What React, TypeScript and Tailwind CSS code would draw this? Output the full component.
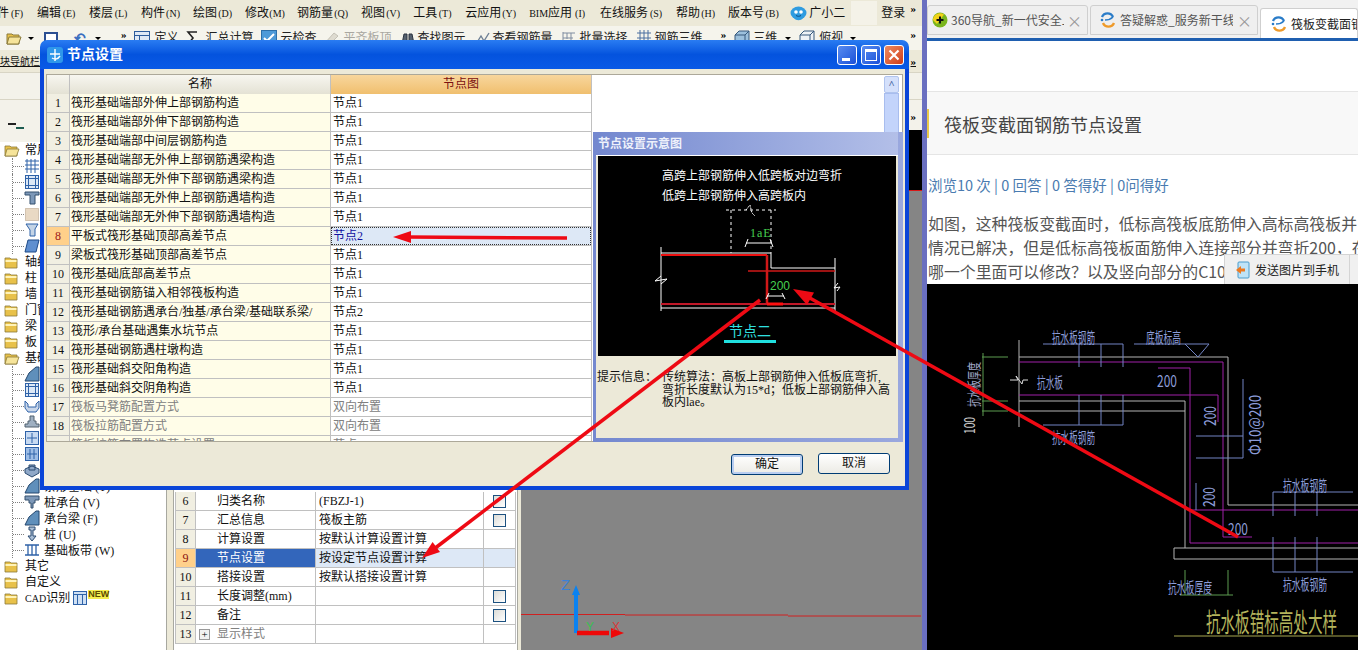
const menuItems = [
  ["文件", "(F)"],
  ["编辑", "(E)"],
  ["楼层", "(L)"],
  ["构件", "(N)"],
  ["绘图", "(D)"],
  ["修改", "(M)"],
  ["钢筋量", "(Q)"],
  ["视图", "(V)"],
  ["工具", "(T)"],
  ["云应用", "(Y)"],
  ["BIM应用", "(I)"],
  ["在线服务", "(S)"],
  ["帮助", "(H)"],
  ["版本号", "(B)"],
];

const nodeRows = [
  ["筏形基础端部外伸上部钢筋构造", "节点1"],
  ["筏形基础端部外伸下部钢筋构造", "节点1"],
  ["筏形基础端部中间层钢筋构造", "节点1"],
  ["筏形基础端部无外伸上部钢筋遇梁构造", "节点1"],
  ["筏形基础端部无外伸下部钢筋遇梁构造", "节点1"],
  ["筏形基础端部无外伸上部钢筋遇墙构造", "节点1"],
  ["筏形基础端部无外伸下部钢筋遇墙构造", "节点1"],
  ["平板式筏形基础顶部高差节点", "节点2"],
  ["梁板式筏形基础顶部高差节点", "节点1"],
  ["筏形基础底部高差节点", "节点1"],
  ["筏形基础钢筋锚入相邻筏板构造", "节点1"],
  ["筏形基础钢筋遇承台/独基/承台梁/基础联系梁/", "节点2"],
  ["筏形/承台基础遇集水坑节点", "节点1"],
  ["筏形基础钢筋遇柱墩构造", "节点1"],
  ["筏形基础斜交阳角构造", "节点1"],
  ["筏形基础斜交阴角构造", "节点1"],
  ["筏板马凳筋配置方式", "双向布置"],
  ["筏板拉筋配置方式", "双向布置"],
  ["筏板拉筋布置构造节点设置", "节点1"],
];

const propRows = [
  { n: 6, name: "归类名称", value: "(FBZJ-1)", check: true },
  { n: 7, name: "汇总信息", value: "筏板主筋", check: true },
  { n: 8, name: "计算设置", value: "按默认计算设置计算" },
  { n: 9, name: "节点设置", value: "按设定节点设置计算", selected: true },
  { n: 10, name: "搭接设置", value: "按默认搭接设置计算" },
  { n: 11, name: "长度调整(mm)", value: "", check: true },
  { n: 12, name: "备注", value: "", check: true },
  { n: 13, name: "显示样式", value: "", plus: true },
];

// labels of the child rows above 条形基础 sit behind the dialog, so they are left out
const treeRows: { label: string; icon?: string; open?: boolean }[] = [
  { label: "常用", open: true },
  { label: "", icon: "grid" },
  { label: "", icon: "frame" },
  { label: "", icon: "column" },
  { label: "", icon: "speck" },
  { label: "", icon: "beam" },
  { label: "", icon: "slab" },
  { label: "轴线" },
  { label: "柱" },
  { label: "墙" },
  { label: "门窗洞" },
  { label: "梁" },
  { label: "板" },
  { label: "基础", open: true },
  { label: "", icon: "beam2" },
  { label: "", icon: "frame" },
  { label: "", icon: "cup" },
  { label: "", icon: "pier" },
  { label: "", icon: "cross" },
  { label: "", icon: "cross2" },
  { label: "", icon: "block" },
  { label: "条形基础 (T)", icon: "beam2" },
  { label: "桩承台 (V)", icon: "pier2" },
  { label: "承台梁 (F)", icon: "beam2" },
  { label: "桩 (U)", icon: "pile" },
  { label: "基础板带 (W)", icon: "band" },
  { label: "其它" },
  { label: "自定义" },
];

function Folder({ open }: { open?: boolean }) {
  return (
    <svg width="16" height="14" viewBox="0 0 16 14" className="shrink-0">
      <path d="M1 3h5l1 1h6v9H1z" fill="#e8c14a" stroke="#8a7a3a" strokeWidth="0.8" />
      {open ? (
        <path d="M3 6h12l-2.5 7H1z" fill="#f6e49a" stroke="#8a7a3a" strokeWidth="0.8" />
      ) : (
        <path d="M1.5 5h11v2h-11z" fill="#fff3b8" />
      )}
    </svg>
  );
}

function TreeIcon({ kind }: { kind: string }) {
  const blue = "#2f62a8";
  return (
    <svg width="16" height="16" viewBox="0 0 16 16" className="shrink-0">
      {kind === "grid" && <path d="M1 3h14M1 7h14M1 11h14M3 1v14M7 1v14M11 1v14" stroke={blue} strokeWidth="1" fill="none" />}
      {kind === "frame" && (
        <g fill="#dce8f6" stroke={blue}>
          <rect x="1.5" y="1.5" width="13" height="13" />
          <rect x="4.5" y="4.5" width="7" height="7" />
          <path d="M1.5 4.5h13M1.5 11.5h13M4.5 1.5v13M11.5 1.5v13" fill="none" />
        </g>
      )}
      {kind === "bars" && (
        <g fill="#cfe0f4" stroke={blue}>
          <rect x="1.5" y="1.5" width="13" height="13" />
          <path d="M1.5 4.5h13M5.5 4.5v10M10.5 4.5v10" fill="none" />
        </g>
      )}
      {kind === "column" && <path d="M1 2h14v3h-4v9H6V5H1z" fill="#7d98b8" stroke="#34506e" />}
      {kind === "speck" && <rect x="1.5" y="2.5" width="13" height="12" fill="#e9d9c4" stroke="#b09a80" strokeDasharray="1 1" />}
      {kind === "beam" && <path d="M2 2h12l-3 5v7H6V8z" fill="#c4d4e6" stroke={blue} />}
      {kind === "slab" && <path d="M4 2h11l-3 12H1z" fill="#5f8fd0" stroke="#1e4a88" />}
      {kind === "beam2" && <path d="M1 15l4-8 7-6h3v14z" fill="#5f8fbb" stroke="#24476e" />}
      {kind === "cup" && <path d="M1 3l3 3v3h8V6l3-3v7l-3 4H4l-3-4z" fill="#c8d6ea" stroke={blue} />}
      {kind === "pier" && <path d="M6 2h4v5h2v3h3v3H1v-3h3V7h2z" fill="#9fb0c2" stroke="#51606e" />}
      {kind === "pier2" && <path d="M1 2h14v4h-4v3H9v5H7V9H5V6H1z" fill="#7d98b8" stroke="#34506e" />}
      {kind === "cross" && (
        <g fill="#c7daf2" stroke={blue}>
          <rect x="1.5" y="1.5" width="13" height="13" />
          <path d="M8 3v10M3 8h10" fill="none" />
        </g>
      )}
      {kind === "cross2" && (
        <g fill="#9dbde6" stroke={blue}>
          <rect x="1.5" y="1.5" width="13" height="13" />
          <path d="M6 3v10M10 3v10M3 8h10" fill="none" />
        </g>
      )}
      {kind === "block" && <path d="M1 7l7-3 7 3v4l-7 4-7-4zM5 3h6v5H5z" fill="#8fa8c8" stroke="#2b4a70" />}
      {kind === "pile" && <path d="M5 1h6v3H9v6h3l-4 5-4-5h3V4H5z" fill="#a9bed6" stroke="#2b4a70" />}
      {kind === "band" && <path d="M1 3h14M1 13h14M4 3v10M8 3v10M12 3v10" stroke={blue} strokeWidth="1.3" fill="none" />}
    </svg>
  );
}

function Chevrons() {
  return <span className="text-[11px] font-bold leading-none text-black">»</span>;
}

function ToolIcon({ kind, className }: { kind: string; className: string }) {
  return (
    <svg width="16" height="16" viewBox="0 0 16 16" className={className}>
      {kind === "table" && (
        <g fill="#dfe9f6" stroke="#2d5c9c">
          <rect x="0.5" y="1.5" width="15" height="13" />
          <path d="M0.5 5.5h15M5.5 5.5v9" fill="none" />
        </g>
      )}
      {kind === "sigma" && <path d="M12 2H3l5 6-5 6h9" fill="none" stroke="#222" strokeWidth="1.6" />}
      {kind === "check" && (
        <g>
          <rect x="0.5" y="0.5" width="15" height="15" fill="#4d9ad8" stroke="#2d6fa8" />
          <path d="M3 8l3 3 7-7" fill="none" stroke="#fff" strokeWidth="2" />
        </g>
      )}
      {kind === "flat" && <path d="M1 14L11 3l4 3-9 9z" fill="#dedbd0" stroke="#c4c1b6" />}
      {kind === "binoc" && <path d="M2 14l2-10h3v10zM9 14V4h3l2 10z" fill="#54606e" stroke="#2a3340" />}
      {kind === "bars" && <path d="M1 14L6 6l3 5 5-8" fill="none" stroke="#6d7f94" strokeWidth="1.4" />}
      {kind === "batch" && <path d="M2 2v12M2 3h12M6 3v6M10 3v9M2 8h10" fill="none" stroke="#7e8ca0" />}
      {kind === "rebar" && <path d="M1 3h14M1 8h14M4 0v16M8 0v16M12 0v16" fill="none" stroke="#4a6ea0" />}
      {kind === "cube" && <path d="M1 5l4-4h10v10l-4 4H1zM1 5h10v10M11 5l4-4" fill="#9cc0dc" stroke="#36597c" />}
      {kind === "cube2" && <path d="M1 5l4-4h10v10l-4 4H1zM1 5h10v10M11 5l4-4" fill="#eef2f6" stroke="#36597c" />}
    </svg>
  );
}

function Caret({ className }: { className: string }) {
  return <span className={`w-0 h-0 border-x-[3px] border-x-transparent border-t-[3px] border-t-black ${className}`} />;
}

function MenuBar() {
  return (
    <div className="h-[26px] flex items-center text-[12px] text-[#111] bg-[#ece9d8] whitespace-nowrap overflow-hidden">
      <div className="flex items-center gap-[12px] -ml-[15px]">
        {menuItems.map(([label, key]) => (
          <span key={label}>
            {label === "BIM应用" ? (
              <>
                <span className="text-[10px]">BIM</span>应用
              </>
            ) : (
              label
            )}
            <span className="inline-block w-[16px] text-center text-[10px] font-normal">{key}</span>
          </span>
        ))}
      </div>
      <svg width="17" height="16" viewBox="0 0 17 16" className="ml-[10px] shrink-0">
        <ellipse cx="8.5" cy="8" rx="8" ry="6.5" fill="#2f9ce0" />
        <path d="M4 13c2 3 7 3 9 0z" fill="#2f9ce0" />
        <circle cx="6" cy="7" r="1.8" fill="#fff" />
        <circle cx="11" cy="7" r="1.8" fill="#fff" />
        <path d="M6 10.5c1.5 1 3.5 1 5 0" stroke="#0b4a80" fill="none" />
      </svg>
      <span className="ml-[2px]">广小二</span>
      <span className="ml-[6px] w-[26px] h-[24px] bg-[#f4f2e8]" />
      <span className="ml-[4px]">登录</span>
      <span className="ml-auto self-start mt-[2px] pr-[6px] leading-none">
        <Chevrons />
      </span>
    </div>
  );
}

function ToolBar() {
  return (
    <div className="h-[24px] flex items-center text-[12px] text-[#222] bg-[#f5f4ec] whitespace-nowrap overflow-hidden">
      <svg width="16" height="14" viewBox="0 0 16 14" className="ml-[6px] shrink-0">
        <path d="M1 3h5l1 1h6v9H1z" fill="#e8c14a" stroke="#8a7a3a" />
        <path d="M3 6h12l-2.5 7H1z" fill="#f6e49a" stroke="#8a7a3a" />
      </svg>
      <Caret className="ml-[6px]" />
      <span className="ml-[10px] w-[14px] h-[13px] border-2 border-[#2c4f92] bg-white" />
      <span className="ml-[16px] text-[14px] text-[#3a6ec0] font-bold w-[12px]">↶</span>
      <Caret className="ml-[9px]" />
      <span className="ml-[20px] self-start mt-[2px] leading-none">
        <Chevrons />
      </span>
      <ToolIcon kind="table" className="ml-[7px] shrink-0" />
      <span className="ml-[5px]">定义</span>
      <ToolIcon kind="sigma" className="ml-[6px] shrink-0" />
      <span className="ml-[5px]">汇总计算</span>
      <ToolIcon kind="check" className="ml-[7px] shrink-0" />
      <span className="ml-[4px]">云检查</span>
      <ToolIcon kind="flat" className="ml-[6px] shrink-0" />
      <span className="ml-[5px] text-[#a9a7a0]">平齐板顶</span>
      <ToolIcon kind="binoc" className="ml-[8px] shrink-0" />
      <span className="ml-[2px]">查找图元</span>
      <ToolIcon kind="bars" className="ml-[9px] shrink-0" />
      <span className="ml-[2px]">查看钢筋量</span>
      <ToolIcon kind="batch" className="ml-[8px] shrink-0" />
      <span className="ml-[3px]">批量选择</span>
      <ToolIcon kind="rebar" className="ml-[8px] shrink-0" />
      <span className="ml-[3px]">钢筋三维</span>
      <span className="ml-[18px] self-start mt-[2px] leading-none">
        <Chevrons />
      </span>
      <ToolIcon kind="cube" className="ml-[8px] shrink-0" />
      <span className="ml-[3px]">三维</span>
      <Caret className="ml-[8px]" />
      <ToolIcon kind="cube2" className="ml-[8px] shrink-0" />
      <span className="ml-[4px]">俯视</span>
      <Caret className="ml-[7px]" />
      <span className="ml-auto self-start mt-[2px] pr-[6px] leading-none">
        <Chevrons />
      </span>
    </div>
  );
}

function NavTree() {
  return (
    <div className="w-[166px] shrink-0 flex flex-col bg-white text-[12px] text-[#111] whitespace-nowrap overflow-hidden">
      <div className="h-[12px] bg-[#f3f2ea] shrink-0" />
      {treeRows.map((row, i) =>
        row.icon ? (
          <div key={i} className="h-[16px] flex items-center">
            <span className="ml-[12px] h-[16px] border-l border-dotted border-[#808080] flex items-center">
              <span className="w-[11px] border-t border-dotted border-[#808080]" />
            </span>
            <TreeIcon kind={row.icon} />
            {row.label && <span className="ml-[4px] mt-[1px]">{row.label}</span>}
          </div>
        ) : (
          <div key={i} className="h-[16px] flex items-center pl-[4px]">
            <Folder open={row.open} />
            <span className="ml-[5px]">{row.label}</span>
          </div>
        ),
      )}
      <div className="h-[16px] flex items-center pl-[4px]">
        <Folder />
        <span className="ml-[5px]">
          <span className="text-[10px]">CAD</span>识别
        </span>
        <span className="ml-[2px] flex">
          <TreeIcon kind="bars" />
        </span>
        <span className="-mt-[7px] text-[9px] font-bold leading-none bg-[#f5ee50] text-[#5a4a00] font-['Liberation_Sans',sans-serif]">
          NEW
        </span>
      </div>
    </div>
  );
}

function PropTable() {
  return (
    <div className="w-[345px] shrink-0 flex flex-col justify-end bg-white pl-[1px] pr-[1px] pb-[6px] border-x border-[#a8a8a0] text-[12px] text-[#111] whitespace-nowrap">
      <div className="border-l border-[#c0c0c0]">
        {propRows.map((row) => (
          <div key={row.n} className="h-[19px] flex border-b border-[#c0c0c0] leading-[18px]">
            <span
              className={`w-[20px] text-center border-r border-[#c0c0c0] ${row.selected ? "bg-[#ffd08a] text-[#8a1010]" : "bg-[#f1efe2]"}`}
            >
              {row.n}
            </span>
            <span
              className={`w-[120px] flex items-center border-r border-[#c0c0c0] ${row.selected ? "bg-[#3366bb] text-white" : ""} ${row.plus ? "text-[#808080]" : ""}`}
            >
              {row.plus ? (
                <span className="ml-[3px] mr-[7px] w-[11px] h-[11px] border border-[#9a9a9a] bg-[#f2f2f2] text-black text-[11px] leading-[9px] text-center">
                  +
                </span>
              ) : (
                <span className="ml-[21px]" />
              )}
              {row.name}
            </span>
            <span className={`w-[168px] pl-[3px] border-r border-[#c0c0c0] ${row.selected ? "bg-[#dde8f6]" : ""}`}>
              {row.value}
            </span>
            <span className={`flex-1 flex items-center justify-center border-r border-[#c0c0c0] ${row.selected ? "bg-[#dde8f6]" : ""}`}>
              {row.check && <span className="w-[13px] h-[13px] border border-[#1c5180] bg-gradient-to-br from-[#dcdcd7] to-white" />}
            </span>
          </div>
        ))}
      </div>
    </div>
  );
}

function Canvas() {
  return (
    <div className="relative flex-1 ml-[3px] flex flex-col bg-[#858585] overflow-hidden">
      <div className="h-[60px] bg-black shrink-0" />
      <div className="h-px bg-[#d81818]" />
      <svg width="400" height="100" viewBox="521 550 400 100" className="absolute left-0 bottom-0">
        <path d="M521 614.5h104M625 615h163M788 616h133" stroke="#d02020" strokeWidth="1" fill="none" />
        <path d="M576 633V590" stroke="#0a82f0" strokeWidth="4" />
        <path d="M576 585l-4 10h8z" fill="#0a82f0" />
        <path d="M577 633h32" stroke="#ee0808" strokeWidth="4.5" />
        <path d="M624 633l-13-5v10z" fill="#ee0808" />
        <text x="561" y="590" fill="#3a80d8" fontSize="15" fontFamily="Liberation Sans, sans-serif">
          Z
        </text>
        <text x="586" y="631" fill="#38c050" fontSize="12" fontFamily="Liberation Sans, sans-serif">
          Y
        </text>
        <text x="612" y="631" fill="#d83838" fontSize="12" fontFamily="Liberation Sans, sans-serif">
          X
        </text>
      </svg>
    </div>
  );
}

function DetailDrawing() {
  return (
    <svg width="298" height="200" viewBox="0 0 298 200" className="block bg-black">
      <text x="64" y="24" fill="#fff" fontSize="12">
        高跨上部钢筋伸入低跨板对边弯折
      </text>
      <text x="64" y="44" fill="#fff" fontSize="12">
        低跨上部钢筋伸入高跨板内
      </text>
      <path d="M128 54h50M133 54v43M173 54v43" stroke="#fff" strokeDasharray="3 3" fill="none" />
      <path d="M148 54l4-5 2 8 3 3" stroke="#fff" strokeDasharray="2 1" fill="none" />
      <text x="152" y="81" fill="#46d050" fontSize="12" letterSpacing="1">
        1aE
      </text>
      <path d="M148 87h26M150 83l-3 8M172 83l3 8" stroke="#fff" fill="none" />
      <path d="M63 91v64M63 97h110v15h64M237 102v53M63 152h174" stroke="#fff" fill="none" />
      <path d="M63 99h106" stroke="#ee1010" strokeWidth="2" />
      <path d="M169 99v48" stroke="#d01818" strokeWidth="2.5" />
      <path d="M150 115h87" stroke="#d01818" strokeWidth="1.6" />
      <path d="M63 148h174" stroke="#c01828" strokeWidth="2" />
      <path d="M169 148h16" stroke="#ff1010" strokeWidth="3" />
      <path d="M63 120l-6 5 12-2-6 5" stroke="#fff" fill="none" />
      <path d="M240 127l-4 5 6-1-3 4" stroke="#fff" fill="none" />
      <text x="172" y="134" fill="#46d050" fontSize="12" fontFamily="Liberation Sans, sans-serif">
        200
      </text>
      <path d="M169 140h17M171 137l-3 6M184 137l3 6" stroke="#fff" fill="none" />
      <text x="131" y="180" fill="#30e0e0" fontSize="14">
        节点二
      </text>
      <rect x="126" y="184" width="52" height="3" fill="#20e0e0" />
    </svg>
  );
}

function NodeDialog() {
  return (
    <div className="absolute left-[40px] top-[40px] w-[869px] h-[450px] flex flex-col rounded-t-[7px] overflow-hidden text-[12px] text-[#111]">
      <div className="h-[29px] shrink-0 flex items-center bg-gradient-to-b from-[#2a7cf2] via-[#0453de] to-[#0a5ae6] text-white">
        <svg width="16" height="16" viewBox="0 0 16 16" className="ml-[7px]">
          <rect width="16" height="16" rx="3" fill="#2f97ea" />
          <path d="M8 2v12M3 7h10M5 11c3 2 6 1 8-2" stroke="#fff" strokeWidth="1.4" fill="none" />
        </svg>
        <span className="ml-[4px] text-[14px] font-bold">节点设置</span>
        <span className="ml-auto w-[20px] h-[20px] rounded-[3px] border border-white bg-gradient-to-br from-[#5a8cf0] to-[#1a4fd8] flex items-end pl-[4px] pb-[3px]">
          <span className="w-[8px] h-[3px] bg-white" />
        </span>
        <span className="ml-[4px] w-[20px] h-[20px] rounded-[3px] border border-white bg-gradient-to-br from-[#5a8cf0] to-[#1a4fd8] p-[3px]">
          <span className="block w-full h-full border border-t-[3px] border-white" />
        </span>
        <span className="ml-[3px] mr-[5px] w-[20px] h-[20px] rounded-[3px] border border-white bg-gradient-to-br from-[#ee8a60] to-[#cf3a14] flex items-center justify-center">
          <svg width="12" height="12" viewBox="0 0 12 12">
            <path d="M1.5 1.5l9 9M10.5 1.5l-9 9" stroke="#fff" strokeWidth="2.2" />
          </svg>
        </span>
      </div>
      <div className="relative flex-1 flex flex-col bg-[#ece9d8] border-x-[4px] border-b-[4px] border-[#0a45d8]">
        <div className="mt-[5px] mx-[2px] h-[368px] flex bg-white border border-[#aca899] overflow-hidden">
          <div className="w-[545px] shrink-0 border-r border-[#c0c0c0] whitespace-nowrap">
            <div className="h-[19px] flex leading-[19px] text-center">
              <span className="w-[23px] bg-gradient-to-b from-[#f7f6f0] to-[#e4e2d4] border-r border-[#c0c0c0]" />
              <span className="w-[261px] bg-gradient-to-b from-[#f7f6f0] to-[#e4e2d4] border-r border-[#c0c0c0]">名称</span>
              <span className="flex-1 bg-gradient-to-b from-[#f8d69c] to-[#f0bf6e] text-[#7a1010]">节点图</span>
            </div>
            {nodeRows.map(([name, value], i) => (
              <div key={i} className="h-[19px] flex leading-[18px] border-b border-[#c0c0c0]">
                <span
                  className={`w-[23px] text-center border-r border-[#c0c0c0] ${i === 7 ? "bg-[#ffd08a] text-[#a01818]" : "bg-[#f1efe2]"}`}
                >
                  {i + 1}
                </span>
                <span
                  className={`w-[261px] pl-[1px] overflow-hidden bg-[#fffde8] border-r border-[#c0c0c0] ${i > 15 ? "text-[#808080]" : ""}`}
                >
                  {name}
                </span>
                <span
                  className={`flex-1 pl-[2px] ${i === 7 ? "bg-[#dde8f6] text-[#1010a0] outline-1 -outline-offset-1 outline-dotted outline-[#333]" : ""} ${i > 15 ? "text-[#808080]" : ""}`}
                >
                  {value}
                </span>
              </div>
            ))}
          </div>
          <div className="flex-1" />
          <div className="w-[18px] shrink-0 flex flex-col pt-[1px] pr-[3px]">
            <span className="h-[17px] rounded-[2px] bg-[#d4e0fb] border border-[#b0c4ee] text-center text-[10px] leading-[14px] text-[#3a5a9a] font-bold">
              ˄
            </span>
            <span className="h-[40px] bg-[#c3d4fb] border border-[#a8bdee]" />
          </div>
        </div>
        <div className="absolute left-[549px] top-[63px] w-[310px] h-[310px] flex flex-col bg-gradient-to-r from-[#7488cf] to-[#9aa8de] pl-[3px] pr-[5px] pb-[4px]">
          <div className="h-[24px] shrink-0 flex items-center pt-[1px] pl-[2px] text-[#eef1fb] font-bold bg-gradient-to-r from-[#7488cf] to-[#b3bfe8] border-b border-white">
            节点设置示意图
          </div>
          <div className="flex-1 flex flex-col bg-[#ece9d8]">
            <div className="pl-[2px]">
              <DetailDrawing />
            </div>
            <div className="flex pt-[15px] pl-[1px] leading-[12.5px] text-[12px] whitespace-nowrap">
              <span className="w-[65px] shrink-0">提示信息：</span>
              <span>
                传统算法：高板上部钢筋伸入低板底弯折,
                <br />
                弯折长度默认为15*d；低板上部钢筋伸入高
                <br />
                板内lae。
              </span>
            </div>
          </div>
        </div>
        <div className="flex justify-end items-start gap-[15px] mt-[11px] pr-[15px]">
          <span className="mt-px w-[72px] h-[21px] rounded-[3px] border border-[#003c74] bg-gradient-to-b from-white to-[#ecebe5] shadow-[inset_0_0_0_2px_#b8cdf0] text-center leading-[19px]">
            确定
          </span>
          <span className="w-[72px] h-[21px] rounded-[3px] border border-[#003c74] bg-gradient-to-b from-white to-[#ecebe5] text-center leading-[19px]">
            取消
          </span>
        </div>
      </div>
    </div>
  );
}

function CadDetail() {
  const blue = "#7284c4";
  const purple = "#a020a8";
  const gray = "#b4b4b4";
  const green = "#5c9c50";
  const txt = "#8c9cd8";
  return (
    <svg width="431" height="366" viewBox="927 284 431 366" className="block bg-black">
      <g fill="none">
        <path d="M1019 340v87M1019 357h209v148h130M1019 401h166v147M1019 411h166M1174 548h184M1174 559h184M1174 548v11" stroke={gray} />
        <path d="M1019 362h204v175h29M1019 395h199v27M1158 368h32v175h168M1190 510h168" stroke={purple} />
        <path d="M1043 344h80M1079 344v23M1101 344v23M1123 344v23M1134 344h75l-11 13-13-13M1043 425h80M1079 395v30M1101 395v30M1123 395v30M1243 379v79M1196 436h47M1196 458h47M1273 492h80M1273 492v24M1295 492v24M1317 492v24M1273 537v35M1295 537v35M1317 537v35M1273 572h80M1196 483v27" stroke={blue} />
        <path d="M983 353v63M982 357h26M982 401h26M982 411h26M1185 570v25M1228 570v25M1180 595h53" stroke={green} />
        <path d="M1010 380h8l-2 -4 6 8 1-4h5" stroke="#ddd" />
        <path d="M1174 636h184" stroke="#a8a850" />
      </g>
      <g fontSize="15" fill={txt}>
        <text x="1052" y="343" textLength="43" lengthAdjust="spacingAndGlyphs">抗水板钢筋</text>
        <text x="1146" y="343" textLength="35" lengthAdjust="spacingAndGlyphs">底板标高</text>
        <text x="1037" y="388" textLength="26" lengthAdjust="spacingAndGlyphs">抗水板</text>
        <text x="1052" y="443" textLength="43" lengthAdjust="spacingAndGlyphs">抗水板钢筋</text>
        <text x="1283" y="491" textLength="44" lengthAdjust="spacingAndGlyphs">抗水板钢筋</text>
        <text x="1283" y="590" textLength="44" lengthAdjust="spacingAndGlyphs">抗水板钢筋</text>
        <text x="1168" y="593" textLength="44" lengthAdjust="spacingAndGlyphs">抗水板厚度</text>
        <text x="1157" y="387" fontSize="17" textLength="20" lengthAdjust="spacingAndGlyphs">200</text>
        <text x="1228" y="535" fontSize="17" textLength="20" lengthAdjust="spacingAndGlyphs">200</text>
        <text transform="translate(1216 426) rotate(-90)" fontSize="17" textLength="20" lengthAdjust="spacingAndGlyphs">200</text>
        <text transform="translate(1215 507) rotate(-90)" fontSize="17" textLength="20" lengthAdjust="spacingAndGlyphs">200</text>
        <text transform="translate(1261 455) rotate(-90)" fontSize="17" textLength="60" lengthAdjust="spacingAndGlyphs">Φ10@200</text>
        <text transform="translate(979 407) rotate(-90)" fontSize="14" textLength="45" lengthAdjust="spacingAndGlyphs" fill="#a0a8c8">抗水板厚度</text>
        <text transform="translate(975 434) rotate(-90)" fontSize="15" textLength="17" lengthAdjust="spacingAndGlyphs" fill="#c8c8c8">100</text>
        <text x="1206" y="632" fontSize="26" textLength="131" lengthAdjust="spacingAndGlyphs" fill="#b4b45c">抗水板错标高处大样</text>
      </g>
    </svg>
  );
}

function TabLogo() {
  return (
    <svg width="16" height="16" viewBox="0 0 16 16" className="shrink-0">
      <path d="M13 5A6 6 0 0 0 2 5" stroke="#2a7cc8" strokeWidth="2.4" fill="none" />
      <path d="M3 11a6 6 0 0 0 11 0" stroke="#ee9a2a" strokeWidth="2.4" fill="none" />
      <path d="M13 5c-3 3-6 3-8 3" stroke="#2a7cc8" strokeWidth="1.6" fill="none" />
      <circle cx="2" cy="8" r="1.3" fill="#2a7cc8" />
    </svg>
  );
}

function BrowserPane() {
  return (
    <div className="relative w-[431px] shrink-0 flex flex-col bg-white font-['Noto_Sans_CJK_SC',sans-serif] whitespace-nowrap overflow-hidden">
      <div className="h-[38px] shrink-0 flex items-end gap-[2px] bg-[#f1f1f1] text-[12px] text-[#555]">
        <div className="w-[161px] h-[30px] mb-[3px] flex items-center gap-[3px] pl-[4px] pr-[3px] rounded-t-[3px] border border-[#cfcfcf] bg-[#efefef]">
          <svg width="16" height="16" viewBox="0 0 16 16" className="shrink-0">
            <circle cx="8" cy="8" r="7.5" fill="#7ab51d" />
            <path d="M1 8a7 7 0 0 1 11-5.5L5 12z" fill="#f2d21a" />
            <path d="M8 4.5v7M4.5 8h7" stroke="#111" strokeWidth="2" />
          </svg>
          <span className="w-[113px] overflow-hidden">360导航_新一代安全上网</span>
          <span className="text-[#999] text-[15px] leading-none">×</span>
        </div>
        <div className="w-[168px] h-[30px] mb-[3px] flex items-center gap-[4px] pl-[9px] pr-[3px] rounded-t-[3px] border border-[#cfcfcf] bg-[#efefef]">
          <TabLogo />
          <span className="w-[113px] overflow-hidden">答疑解惑_服务新干线</span>
          <span className="text-[#999] text-[15px] leading-none">×</span>
        </div>
        <div className="flex-1 h-[30px] flex items-center gap-[4px] pl-[10px] rounded-t-[3px] border border-b-0 border-[#cfcfcf] bg-white text-[#222] overflow-hidden">
          <TabLogo />
          <span>筏板变截面钢筋节点设置</span>
        </div>
      </div>
      <div className="h-[3px] shrink-0 bg-[#1f5fb0]" />
      <div className="h-[50px] shrink-0" />
      <div className="h-[64px] shrink-0 flex items-center border-y border-[#e5e5e5] bg-[#f8f8f8]">
        <span className="w-[2px] h-[29px] bg-[#e8c84a]" />
        <span className="ml-[15px] pt-[3px] text-[18px] text-[#444]">筏板变截面钢筋节点设置</span>
      </div>
      <div className="h-[22px] mt-[19px] shrink-0 pl-[1px] text-[14.5px] leading-[22px] text-[#4a7bb0]">
        浏览10 次 | 0 回答 | 0 答得好 | 0问得好
      </div>
      <div className="mt-[16px] pl-[1px] text-[15.9px] leading-[24px] text-[#555] overflow-hidden">
        <p>如图，这种筏板变截面时，低标高筏板底筋伸入高标高筏板并</p>
        <p>情况已解决，但是低标高筏板面筋伸入连接部分并弯折200，在</p>
        <p>哪一个里面可以修改？以及竖向部分的C10</p>
      </div>
      <div className="flex-1 overflow-hidden">
        <CadDetail />
      </div>
      <div className="absolute right-0 top-[254px] w-[134px] h-[30px] flex items-center pl-[11px] text-[12px] text-[#222] bg-[#f0f0f0] border-l border-t border-[#d4d4d4]">
        <svg width="15" height="18" viewBox="0 0 15 18" className="shrink-0">
          <rect x="2" y="1" width="11" height="16" rx="1" fill="#bfe3f7" stroke="#4a9ccc" />
          <path d="M0 9l5-4v2.5h4v3H5V13z" fill="#ee7a20" />
        </svg>
        <span className="ml-[4px]">发送图片到手机</span>
        <span className="ml-auto mr-[8px] w-px h-[29px] bg-[#d4d4d4]" />
      </div>
    </div>
  );
}

export default function App() {
  return (
    <div className="relative w-[1358px] h-[650px] flex overflow-hidden bg-white font-['Liberation_Serif','Noto_Sans_CJK_SC',serif]">
      <div className="relative w-[922px] shrink-0 flex flex-col bg-[#ece9d8]">
        <MenuBar />
        <ToolBar />
        <div className="h-[22px] shrink-0 flex items-center justify-between pr-[6px] text-[10px] underline text-[#111] whitespace-nowrap overflow-hidden">
          <span>块导航栏</span>
          <Chevrons />
        </div>
        <div className="h-[28px] shrink-0 border-t border-b border-[#d8d5c5] bg-[#f3f2ea]" />
        <div className="relative h-[30px] shrink-0 flex bg-[#f3f2ea]">
          <span className="self-end mb-[5px] ml-[8px] w-[8px] h-[2px] bg-[#222]" />
          <span className="self-end mb-[1px] w-[8px] h-[2px] bg-[#1d5c50]" />
          <span className="ml-auto mt-[7px] pr-[6px] leading-none">
            <Chevrons />
          </span>
        </div>
        <div className="flex-1 min-h-0 flex">
          <NavTree />
          <div className="w-[7px] shrink-0 bg-[#ece9d8] border-l border-[#a8a8a0]" />
          <PropTable />
          <Canvas />
        </div>
        <NodeDialog />
      </div>
      <div className="w-[5px] shrink-0 bg-[#6a6fc0]" />
      <BrowserPane />
      <svg width="1358" height="650" viewBox="0 0 1358 650" className="absolute left-0 top-0 pointer-events-none">
        <g stroke="#ee0a14" strokeWidth="3.5" fill="none">
          <path d="M567 238L408 237" />
          <path d="M760 300L434 549" />
          <path d="M1238 537L808 297" />
        </g>
        <g fill="#ee0a14">
          <path d="M393 237L411 231V243z" />
          <path d="M422 558L440 552L432.6 542z" />
          <path d="M793 289L807 305L814 292.6z" />
        </g>
      </svg>
    </div>
  );
}
